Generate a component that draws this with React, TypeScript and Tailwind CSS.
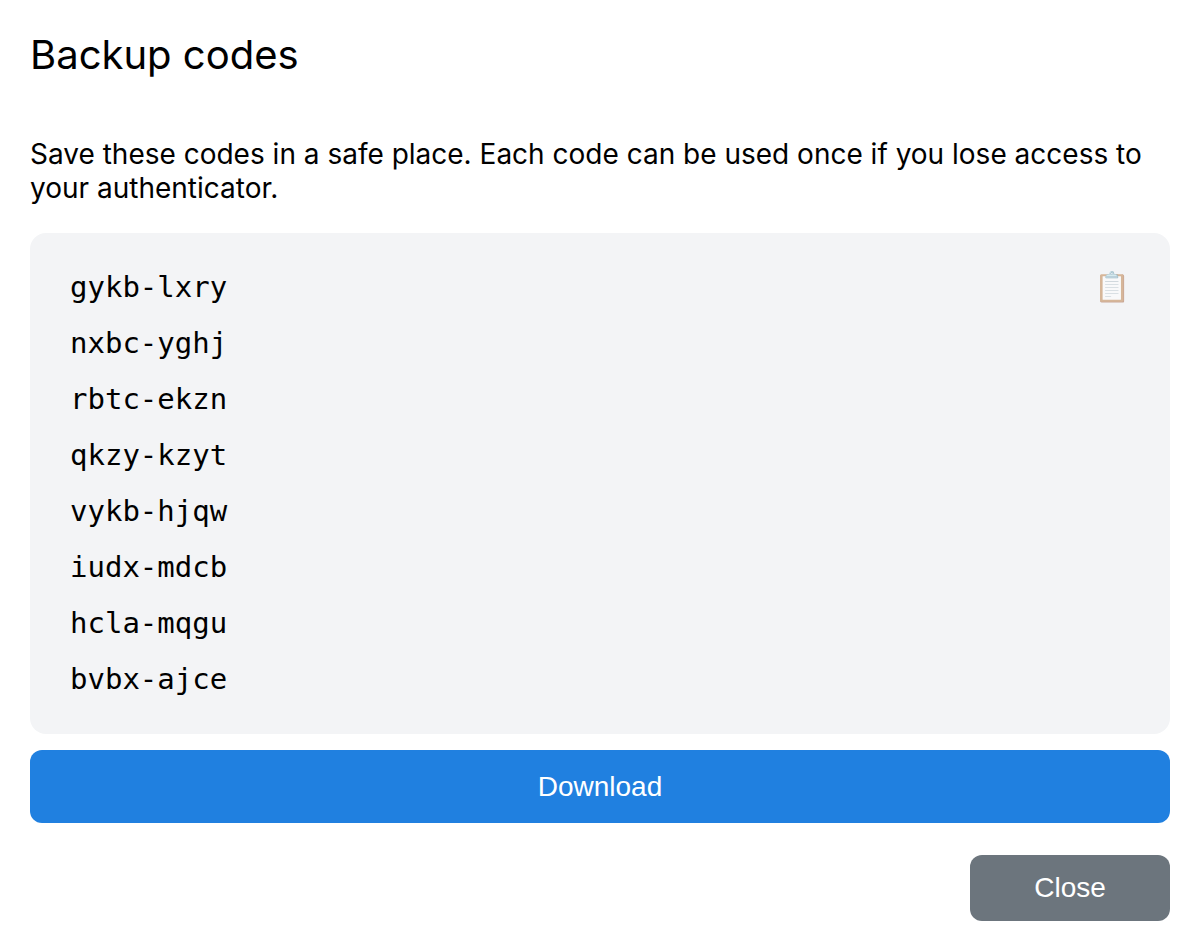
const codes = [
  "gykb-lxry",
  "nxbc-yghj",
  "rbtc-ekzn",
  "qkzy-kzyt",
  "vykb-hjqw",
  "iudx-mdcb",
  "hcla-mqgu",
  "bvbx-ajce",
];

export const CodeList = ({ items }: { items: string[] }) => {
  return (
    <div className="flex items-start justify-between rounded-2xl bg-[#f3f4f6] px-10 pt-[26px] pb-[27px] font-['DejaVu_Sans_Mono',monospace] text-[29px] leading-[56px]">
      <ul>
        {items.map((code) => (
          <li key={code}>{code}</li>
        ))}
      </ul>
      <button type="button" aria-label="Copy codes" className="opacity-50">
        📋
      </button>
    </div>
  );
};

export default function App() {
  return (
    <main className="bg-white p-[30px] font-[Inter,sans-serif] text-black">
      <h1 className="text-[40px] leading-[50px]">Backup codes</h1>
      <p className="mt-[57px] mb-7 text-[28px] leading-[34px]">
        Save these codes in a safe place. Each code can be used once if you lose
        access to your authenticator.
      </p>
      <CodeList items={codes} />
      <button
        type="button"
        className="mt-4 h-[73px] w-full rounded-xl bg-[#2080e0] font-['Liberation_Sans',sans-serif] text-[28px] text-white"
      >
        Download
      </button>
      <div className="mt-8 flex justify-end">
        <button
          type="button"
          className="h-[66px] w-[200px] rounded-xl bg-[#6c757d] font-['Liberation_Sans',sans-serif] text-[28px] text-white"
        >
          Close
        </button>
      </div>
    </main>
  );
}
